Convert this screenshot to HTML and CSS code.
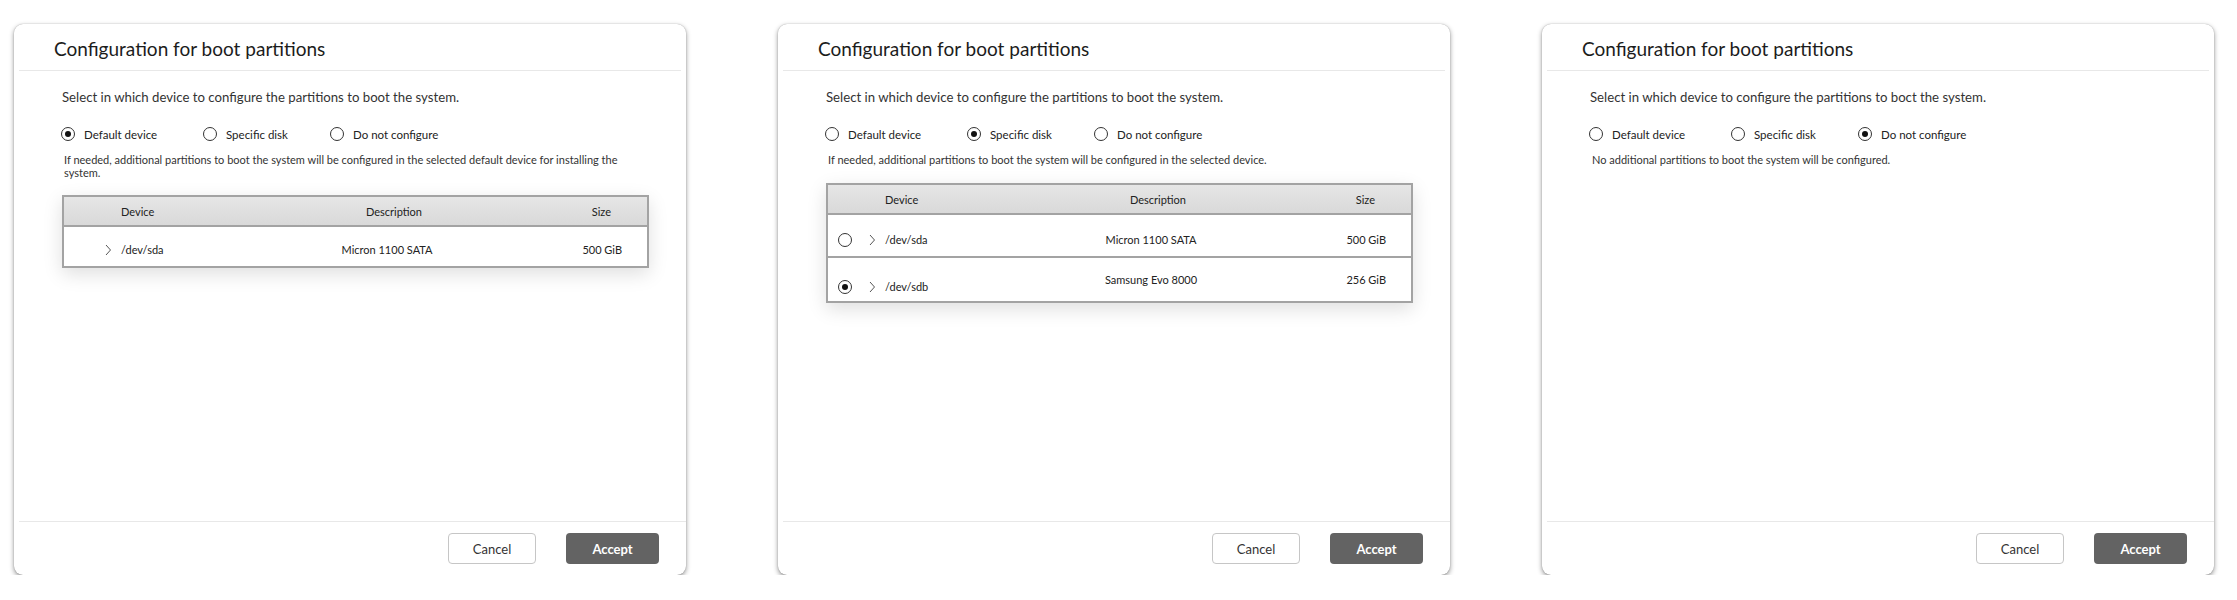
FILE: index.html
```html
<!DOCTYPE html>
<html lang="en">
<head>
<meta charset="utf-8">
<title>Configuration for boot partitions</title>
<link rel="stylesheet" href="styles.css">
</head>
<body>
<div class="canvas">

  <section class="dialog">
    <header class="dialog-header"><h1 class="dialog-title">Configuration for boot partitions</h1></header>
    <div class="sep sep-head"></div>
    <div class="dialog-body">
      <p class="intro">Select in which device to configure the partitions to boot the system.</p>
      <div class="radio-group">
        <div class="radio-opt"><span class="radio checked"></span><span>Default device</span></div>
        <div class="radio-opt"><span class="radio"></span><span>Specific disk</span></div>
        <div class="radio-opt"><span class="radio"></span><span>Do not configure</span></div>
      </div>
      <p class="info">If needed, additional partitions to boot the system will be configured in the selected default device for installing the system.</p>
      <div class="table">
        <div class="trow thead">
          <div class="cell cell-dev"><span class="radio-slot"></span><span class="chev-slot"></span><span>Device</span></div>
          <div class="cell cell-desc">Description</div>
          <div class="cell cell-size">Size</div>
        </div>
        <div class="trow tbody">
          <div class="cell cell-dev"><span class="radio-slot"></span><svg class="chev" width="8" height="12" viewBox="0 0 8 12"><polyline points="2,1 6.5,6 2,11" fill="none" stroke="#555" stroke-width="1"/></svg><span>/dev/sda</span></div>
          <div class="cell cell-desc val">Micron 1100 SATA</div>
          <div class="cell cell-size val">500 GiB</div>
        </div>
      </div>
    </div>
    <div class="sep sep-foot"></div>
    <footer class="dialog-footer">
      <button class="btn btn-cancel">Cancel</button>
      <button class="btn btn-accept">Accept</button>
    </footer>
  </section>

  <section class="dialog">
    <header class="dialog-header"><h1 class="dialog-title">Configuration for boot partitions</h1></header>
    <div class="sep sep-head"></div>
    <div class="dialog-body">
      <p class="intro">Select in which device to configure the partitions to boot the system.</p>
      <div class="radio-group">
        <div class="radio-opt"><span class="radio"></span><span>Default device</span></div>
        <div class="radio-opt"><span class="radio checked"></span><span>Specific disk</span></div>
        <div class="radio-opt"><span class="radio"></span><span>Do not configure</span></div>
      </div>
      <p class="info">If needed, additional partitions to boot the system will be configured in the selected device.</p>
      <div class="table table-pick">
        <div class="trow thead">
          <div class="cell cell-dev"><span class="radio-slot"></span><span class="chev-slot"></span><span>Device</span></div>
          <div class="cell cell-desc">Description</div>
          <div class="cell cell-size">Size</div>
        </div>
        <div class="trow tbody mid">
          <div class="cell cell-dev"><span class="radio radio-slot"></span><svg class="chev" width="8" height="12" viewBox="0 0 8 12"><polyline points="2,1 6.5,6 2,11" fill="none" stroke="#555" stroke-width="1"/></svg><span>/dev/sda</span></div>
          <div class="cell cell-desc val">Micron 1100 SATA</div>
          <div class="cell cell-size val">500 GiB</div>
        </div>
        <div class="trow tbody tall">
          <div class="cell cell-dev low"><span class="radio radio-slot checked"></span><svg class="chev" width="8" height="12" viewBox="0 0 8 12"><polyline points="2,1 6.5,6 2,11" fill="none" stroke="#555" stroke-width="1"/></svg><span>/dev/sdb</span></div>
          <div class="cell cell-desc val">Samsung Evo 8000</div>
          <div class="cell cell-size val">256 GiB</div>
        </div>
      </div>
    </div>
    <div class="sep sep-foot"></div>
    <footer class="dialog-footer">
      <button class="btn btn-cancel">Cancel</button>
      <button class="btn btn-accept">Accept</button>
    </footer>
  </section>

  <section class="dialog">
    <header class="dialog-header"><h1 class="dialog-title">Configuration for boot partitions</h1></header>
    <div class="sep sep-head"></div>
    <div class="dialog-body">
      <p class="intro">Select in which device to configure the partitions to boct the system.</p>
      <div class="radio-group">
        <div class="radio-opt"><span class="radio"></span><span>Default device</span></div>
        <div class="radio-opt"><span class="radio"></span><span>Specific disk</span></div>
        <div class="radio-opt"><span class="radio checked"></span><span>Do not configure</span></div>
      </div>
      <p class="info">No additional partitions to boot the system will be configured.</p>
    </div>
    <div class="sep sep-foot"></div>
    <footer class="dialog-footer">
      <button class="btn btn-cancel">Cancel</button>
      <button class="btn btn-accept">Accept</button>
    </footer>
  </section>

</div>
</body>
</html>
```

FILE: styles.css
```css
html, body {
  margin: 0;
  padding: 0;
  background: #ffffff;
}

body {
  font-family: Lato, "Liberation Sans", Arial, sans-serif;
  color: #2a2a2a;
}

.canvas {
  display: flex;
  gap: 92px;
  padding: 24px 0 0 14px;
}

.dialog {
  width: 672px;
  height: 551px;
  flex: none;
  box-sizing: border-box;
  background: #ffffff;
  border-radius: 9px;
  box-shadow: 0 2px 5px rgba(0, 0, 0, 0.42), 0 0 1px rgba(0, 0, 0, 0.35);
  display: flex;
  flex-direction: column;
}

.dialog-header {
  padding: 14px 40px 10px;
}

.dialog-title {
  margin: 0;
  font-size: 19px;
  line-height: 22px;
  font-weight: 400;
  color: #1c1c1c;
}

.sep {
  height: 1px;
  background: #e8e8e8;
}

.sep-head {
  margin: 0 5px;
}

.sep-foot {
  margin-left: 5px;
}

.dialog-body {
  flex: 1;
  padding: 0 36px 0 48px;
}

.intro {
  margin: 18px 0 0;
  font-size: 13.2px;
  line-height: 16px;
  color: #333;
}

.radio-group {
  margin-top: 21px;
  display: grid;
  grid-template-columns: 142px 127px auto;
  align-items: center;
  height: 16px;
  font-size: 11.5px;
  color: #222;
}

.radio-opt {
  display: flex;
  align-items: center;
  gap: 9px;
  margin-left: -1px;
}

.radio {
  width: 14px;
  height: 14px;
  box-sizing: border-box;
  border: 1px solid #333;
  border-radius: 50%;
  display: inline-flex;
  align-items: center;
  justify-content: center;
  flex: none;
  background: #fff;
}

.radio.checked::after {
  content: "";
  width: 6px;
  height: 6px;
  border-radius: 50%;
  background: #111;
}

.info {
  margin: 11px 0 0 2px;
  font-size: 11px;
  line-height: 13px;
  color: #333;
}

.table {
  margin-top: 16px;
  width: 587px;
  box-sizing: border-box;
  border: 2px solid #a3a3a3;
  background: #fff;
  box-shadow: 0 6px 18px rgba(0, 0, 0, 0.13);
  font-size: 11px;
  color: #222;
}

.table-pick {
  margin-top: 17px;
}

.trow {
  display: grid;
  grid-template-columns: 220px 220px 1fr;
  align-items: center;
}

.thead {
  height: 30px;
  box-sizing: border-box;
  background: linear-gradient(#e6e6e6, #d9d9d9);
  border-bottom: 2px solid #a3a3a3;
}

.tbody {
  height: 39px;
  box-sizing: border-box;
  padding-top: 6px;
}

.tbody.mid {
  height: 41px;
  padding-top: 8px;
}

.tbody + .tbody {
  border-top: 2px solid #a3a3a3;
}

.tbody.tall {
  height: 45px;
  padding-top: 0;
}

.cell-dev {
  display: flex;
  align-items: center;
  padding-left: 10px;
}

.cell-dev.low {
  padding-top: 14px;
}

.radio-slot {
  width: 14px;
  height: 14px;
  flex: none;
}

.chev-slot {
  width: 8px;
  height: 12px;
  flex: none;
}

.chev,
.chev-slot {
  margin-left: 16px;
  margin-right: 9px;
  flex: none;
}

.cell-desc {
  text-align: center;
}

.cell-desc.val {
  padding-right: 14px;
}

.cell-size {
  text-align: right;
  padding-right: 36px;
}

.cell-size.val {
  padding-right: 25px;
}

.dialog-footer {
  display: flex;
  justify-content: flex-end;
  gap: 30px;
  padding: 11px 27px 11px;
}

.btn {
  height: 31px;
  box-sizing: border-box;
  border-radius: 4px;
  font-family: Lato, "Liberation Sans", Arial, sans-serif;
  font-size: 13px;
  padding: 0;
  cursor: pointer;
}

.btn-cancel {
  width: 88px;
  background: #fff;
  border: 1px solid #c6c6c6;
  color: #333;
}

.btn-accept {
  width: 93px;
  background: #636363;
  border: none;
  color: #fff;
  font-weight: 700;
}
```
